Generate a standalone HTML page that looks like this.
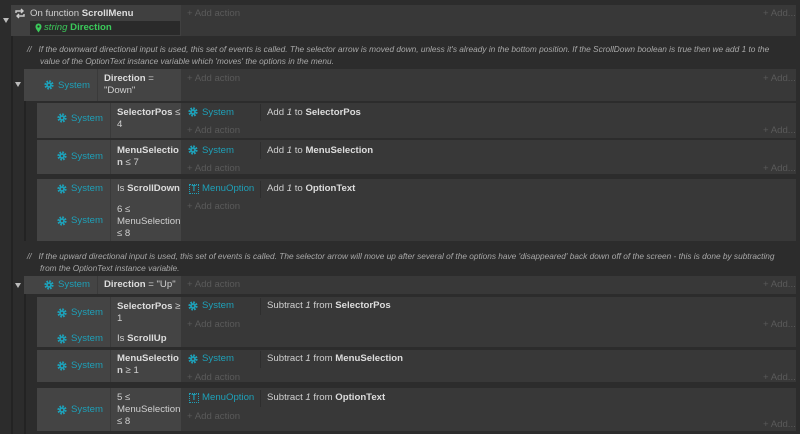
<!DOCTYPE html>
<html><head><meta charset="utf-8"><style>
*{margin:0;padding:0;box-sizing:border-box}
body{width:800px;height:434px;overflow:hidden;background:#2c2c2c;font-family:"Liberation Sans",sans-serif;font-size:9.6px;color:#d0d0d0;position:relative}
.a{position:absolute}
.ev{position:absolute;background:#383838}
.cd{position:absolute;background:#444}
.dv{position:absolute;width:1px;background:#3a3a3a}
.t{position:absolute;white-space:nowrap;line-height:12px}
.b{font-weight:bold;color:#ddd}
.sys{color:#1ea0b8}
.add{color:#5a5a5a}
.cm{color:#a8a8a8;font-style:italic;font-size:8.3px}
.arr{position:absolute;width:0;height:0;border-left:3.5px solid transparent;border-right:3.5px solid transparent;border-top:5px solid #bbb}
</style></head><body>
<svg width="0" height="0" style="position:absolute"><defs>
<g id="gear"><circle cx="5" cy="5" r="3.3" fill="none" stroke="#1ea0b8" stroke-width="2.6" stroke-dasharray="1.6 1"/><circle cx="5" cy="5" r="2.8" fill="#1ea0b8"/><circle cx="5" cy="5" r="1.1" fill="#444"/></g>
</defs></svg>

<div class="a" style="left:11px;top:36px;width:2px;height:398px;background:#232323"></div>
<div class="a" style="left:24px;top:101px;width:2px;height:140px;background:#232323"></div>
<div class="a" style="left:24px;top:294px;width:2px;height:140px;background:#232323"></div>
<div class="arr" style="left:3px;top:18px"></div>
<div class="arr" style="left:15px;top:82px"></div>
<div class="arr" style="left:15px;top:283px"></div>

<div class="ev" style="left:11px;top:5px;width:785px;height:31px"></div>
<div class="cd" style="left:11px;top:5px;width:170px;height:31px;background:#404040"></div>
<div class="a" style="left:30px;top:21px;width:150px;height:14px;background:#2a2a2a"></div>
<svg class="a" style="left:14px;top:8px" width="12" height="11"><path d="M2 5V3h7M7 1l2 2-2 2M10 6v2H3M5 10 3 8l2-2" fill="none" stroke="#ccc" stroke-width="1.4"/></svg>
<div class="t" style="left:30px;top:8px">On function <span class="b">ScrollMenu</span></div>
<svg class="a" style="left:35px;top:23px" width="7" height="10"><path d="M3.5 9.5C1 6 .5 5 .5 3.5a3 3 0 0 1 6 0C6.5 5 6 6 3.5 9.5z" fill="#3bc95a"/><circle cx="3.5" cy="3.5" r="1.1" fill="#2a2a2a"/></svg>
<div class="t" style="left:44px;top:22px;color:#3bc95a"><i>string</i> <b>Direction</b></div>
<div class="t add" style="left:187px;top:8px">+ Add action</div>
<div class="t add" style="left:763px;top:8px">+ Add...</div>

<div class="t cm" style="left:27px;top:43px">//&nbsp;&nbsp;&nbsp;If the downward directional input is used, this set of events is called. The selector arrow is moved down, unless it's already in the bottom position. If the ScrollDown boolean is true then we add 1 to the</div>
<div class="t cm" style="left:40px;top:55px">value of the OptionText instance variable which 'moves' the options in the menu.</div>

<div class="ev" style="left:24px;top:69px;width:772px;height:32px"></div>
<div class="cd" style="left:24px;top:69px;width:157px;height:32px"></div>
<div class="dv" style="left:97px;top:69px;height:32px"></div>
<svg class="a" style="left:44px;top:80px" width="10" height="10"><use href="#gear"/></svg>
<div class="t sys" style="left:58px;top:80px">System</div>
<div class="t" style="left:104px;top:73px"><span class="b">Direction</span> =</div>
<div class="t" style="left:104px;top:85px">"Down"</div>
<div class="t add" style="left:187px;top:73px">+ Add action</div>
<div class="t add" style="left:763px;top:73px">+ Add...</div>

<div class="ev" style="left:37px;top:103px;width:759px;height:35px"></div>
<div class="cd" style="left:37px;top:103px;width:144px;height:35px"></div>
<div class="dv" style="left:110px;top:103px;height:35px"></div>
<svg class="a" style="left:57px;top:113px" width="10" height="10"><use href="#gear"/></svg>
<div class="t sys" style="left:71px;top:113px">System</div>
<div class="t" style="left:117px;top:107px"><span class="b">SelectorPos</span> ≤</div>
<div class="t" style="left:117px;top:119px">4</div>
<svg class="a" style="left:188px;top:107px" width="10" height="10"><use href="#gear"/></svg>
<div class="t sys" style="left:202px;top:107px">System</div>
<div class="dv" style="left:260px;top:104px;height:17px;background:#2e2e2e"></div>
<div class="t" style="left:267px;top:107px">Add <i>1</i> to <span class="b">SelectorPos</span></div>
<div class="t add" style="left:187px;top:125px">+ Add action</div>
<div class="t add" style="left:763px;top:125px">+ Add...</div>

<div class="ev" style="left:37px;top:140px;width:759px;height:34px"></div>
<div class="cd" style="left:37px;top:140px;width:144px;height:34px"></div>
<div class="dv" style="left:110px;top:140px;height:34px"></div>
<svg class="a" style="left:57px;top:151px" width="10" height="10"><use href="#gear"/></svg>
<div class="t sys" style="left:71px;top:151px">System</div>
<div class="t b" style="left:117px;top:145px">MenuSelectio</div>
<div class="t" style="left:117px;top:157px"><b>n</b> ≤ 7</div>
<svg class="a" style="left:188px;top:145px" width="10" height="10"><use href="#gear"/></svg>
<div class="t sys" style="left:202px;top:145px">System</div>
<div class="dv" style="left:260px;top:142px;height:17px;background:#2e2e2e"></div>
<div class="t" style="left:267px;top:145px">Add <i>1</i> to <span class="b">MenuSelection</span></div>
<div class="t add" style="left:187px;top:163px">+ Add action</div>
<div class="t add" style="left:763px;top:163px">+ Add...</div>

<div class="ev" style="left:37px;top:179px;width:759px;height:62px"></div>
<div class="cd" style="left:37px;top:179px;width:144px;height:62px"></div>
<div class="dv" style="left:110px;top:179px;height:62px"></div>
<svg class="a" style="left:57px;top:184px" width="10" height="10"><use href="#gear"/></svg>
<div class="t sys" style="left:71px;top:183px">System</div>
<svg class="a" style="left:57px;top:216px" width="10" height="10"><use href="#gear"/></svg>
<div class="t sys" style="left:71px;top:215px">System</div>
<div class="t" style="left:117px;top:183px">Is <span class="b">ScrollDown</span></div>
<div class="t" style="left:117px;top:204px">6 ≤</div>
<div class="t" style="left:117px;top:216px">MenuSelection</div>
<div class="t" style="left:117px;top:228px">≤ 8</div>
<div class="a" style="left:189px;top:184px;width:10px;height:10px;border:1px dotted #1ea0b8;color:#1ea0b8;font-size:8px;line-height:8px;text-align:center;font-weight:bold">T</div>
<div class="t sys" style="left:202px;top:183px">MenuOption</div>
<div class="dv" style="left:260px;top:181px;height:17px;background:#2e2e2e"></div>
<div class="t" style="left:267px;top:183px">Add <i>1</i> to <span class="b">OptionText</span></div>
<div class="t add" style="left:187px;top:201px">+ Add action</div>

<div class="t cm" style="left:27px;top:250px">//&nbsp;&nbsp;&nbsp;If the upward directional input is used, this set of events is called. The selector arrow will move up after several of the options have 'disappeared' back down off of the screen - this is done by subtracting</div>
<div class="t cm" style="left:40px;top:262px">from the OptionText instance variable.</div>

<div class="ev" style="left:24px;top:276px;width:772px;height:18px"></div>
<div class="cd" style="left:24px;top:276px;width:157px;height:18px"></div>
<div class="dv" style="left:97px;top:276px;height:18px"></div>
<svg class="a" style="left:44px;top:280px" width="10" height="10"><use href="#gear"/></svg>
<div class="t sys" style="left:58px;top:279px">System</div>
<div class="t" style="left:104px;top:279px"><span class="b">Direction</span> = "Up"</div>
<div class="t add" style="left:187px;top:279px">+ Add action</div>
<div class="t add" style="left:763px;top:279px">+ Add...</div>

<div class="ev" style="left:37px;top:297px;width:759px;height:50px"></div>
<div class="cd" style="left:37px;top:297px;width:144px;height:50px"></div>
<div class="dv" style="left:110px;top:297px;height:50px"></div>
<svg class="a" style="left:57px;top:308px" width="10" height="10"><use href="#gear"/></svg>
<div class="t sys" style="left:71px;top:307px">System</div>
<svg class="a" style="left:57px;top:334px" width="10" height="10"><use href="#gear"/></svg>
<div class="t sys" style="left:71px;top:333px">System</div>
<div class="t" style="left:117px;top:301px"><span class="b">SelectorPos</span> ≥</div>
<div class="t" style="left:117px;top:313px">1</div>
<div class="t" style="left:117px;top:333px">Is <span class="b">ScrollUp</span></div>
<svg class="a" style="left:188px;top:301px" width="10" height="10"><use href="#gear"/></svg>
<div class="t sys" style="left:202px;top:300px">System</div>
<div class="dv" style="left:260px;top:298px;height:17px;background:#2e2e2e"></div>
<div class="t" style="left:267px;top:300px">Subtract <i>1</i> from <span class="b">SelectorPos</span></div>
<div class="t add" style="left:187px;top:319px">+ Add action</div>
<div class="t add" style="left:763px;top:319px">+ Add...</div>

<div class="ev" style="left:37px;top:350px;width:759px;height:32px"></div>
<div class="cd" style="left:37px;top:350px;width:144px;height:32px"></div>
<div class="dv" style="left:110px;top:350px;height:32px"></div>
<svg class="a" style="left:57px;top:361px" width="10" height="10"><use href="#gear"/></svg>
<div class="t sys" style="left:71px;top:360px">System</div>
<div class="t b" style="left:117px;top:353px">MenuSelectio</div>
<div class="t" style="left:117px;top:365px"><b>n</b> ≥ 1</div>
<svg class="a" style="left:188px;top:354px" width="10" height="10"><use href="#gear"/></svg>
<div class="t sys" style="left:202px;top:353px">System</div>
<div class="dv" style="left:260px;top:351px;height:17px;background:#2e2e2e"></div>
<div class="t" style="left:267px;top:353px">Subtract <i>1</i> from <span class="b">MenuSelection</span></div>
<div class="t add" style="left:187px;top:372px">+ Add action</div>
<div class="t add" style="left:763px;top:372px">+ Add...</div>

<div class="ev" style="left:37px;top:388px;width:759px;height:43px"></div>
<div class="cd" style="left:37px;top:388px;width:144px;height:43px"></div>
<div class="dv" style="left:110px;top:388px;height:43px"></div>
<svg class="a" style="left:57px;top:405px" width="10" height="10"><use href="#gear"/></svg>
<div class="t sys" style="left:71px;top:404px">System</div>
<div class="t" style="left:117px;top:392px">5 ≤</div>
<div class="t" style="left:117px;top:404px">MenuSelection</div>
<div class="t" style="left:117px;top:416px">≤ 8</div>
<div class="a" style="left:189px;top:393px;width:10px;height:10px;border:1px dotted #1ea0b8;color:#1ea0b8;font-size:8px;line-height:8px;text-align:center;font-weight:bold">T</div>
<div class="t sys" style="left:202px;top:392px">MenuOption</div>
<div class="dv" style="left:260px;top:390px;height:17px;background:#2e2e2e"></div>
<div class="t" style="left:267px;top:392px">Subtract <i>1</i> from <span class="b">OptionText</span></div>
<div class="t add" style="left:187px;top:411px">+ Add action</div>
<div class="t add" style="left:763px;top:419px">+ Add...</div>
</body></html>
